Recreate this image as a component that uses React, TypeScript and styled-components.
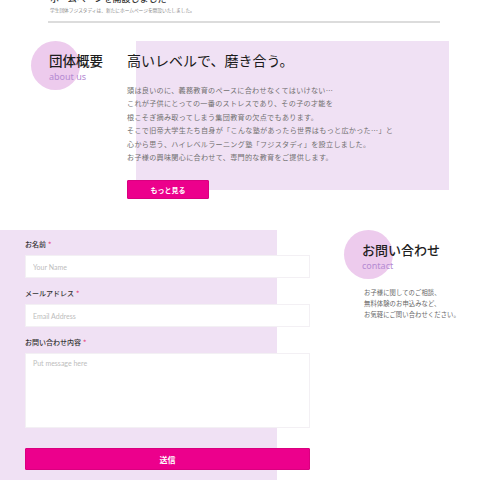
import React from "react";
import styled, { createGlobalStyle } from "styled-components";

const GlobalStyle = createGlobalStyle`
  html, body {
    margin: 0;
    padding: 0;
    background: #ffffff;
    overflow: hidden;
  }
  body {
    font-family: "Noto Sans CJK JP", "Noto Sans", sans-serif;
    color: #222;
  }
  * { box-sizing: border-box; }
`;

const Page = styled.div`
  width: 480px;
  height: 480px;
  overflow: hidden;
`;

/* ---------- news header ---------- */
const NewsHeader = styled.header`
  padding: 0 40px 0 48px;
`;

const NewsTitle = styled.h2`
  margin: -6px 0 0 2px;
  font-size: 9px;
  line-height: 10px;
  font-weight: 500;
  color: #333;
  white-space: nowrap;
`;

const NewsLead = styled.p`
  margin: 3px 0 0 2px;
  font-size: 4.7px;
  line-height: 6px;
  color: #888;
  white-space: nowrap;
`;

const Divider = styled.hr`
  margin: 8px 0 0;
  border: none;
  height: 1.5px;
  background: #dcdcdc;
`;

/* ---------- shared section title with circle ---------- */
const TitleBlock = styled.div`
  position: relative;
  z-index: 0;
  &::before {
    content: "";
    position: absolute;
    left: -18px;
    top: -13px;
    width: 49px;
    height: 49px;
    border-radius: 50%;
    background: #edcbed;
    z-index: -1;
  }
`;

const TitleJa = styled.h2<{ $size: number }>`
  margin: 0;
  font-size: ${(p) => p.$size}px;
  line-height: 1;
  font-weight: 500;
  color: #1e1e1e;
  white-space: nowrap;
`;

const TitleEn = styled.div`
  margin-top: 5px;
  font-family: "Noto Sans", sans-serif;
  font-size: 9px;
  line-height: 10px;
  color: #b48ad2;
  white-space: nowrap;
`;

/* ---------- about ---------- */
const AboutSection = styled.section`
  display: flex;
  margin-top: 18px;
`;

const AboutTitleCol = styled.div`
  width: 127px;
  flex: none;
  padding: 13px 0 0 49px;
`;

const AboutBody = styled.div`
  position: relative;
  z-index: 0;
  padding-top: 12px;
  &::before {
    content: "";
    position: absolute;
    left: 9px;
    top: 0;
    width: 313px;
    height: 149px;
    background: #f0e1f4;
    z-index: -1;
  }
`;

const Catch = styled.h3`
  margin: 0;
  font-size: 14px;
  line-height: 14px;
  font-weight: 400;
  color: #1a1a1a;
  white-space: nowrap;
`;

const AboutText = styled.p`
  margin: 17px 0 0;
  font-size: 7.1px;
  line-height: 13.6px;
  letter-spacing: 0.3px;
  color: #707070;
  white-space: nowrap;
`;

const PinkButton = styled.button<{ $wide?: boolean }>`
  display: block;
  width: ${(p) => (p.$wide ? "100%" : "82px")};
  height: ${(p) => (p.$wide ? "22px" : "19px")};
  border: 1px solid #d9007f;
  border-radius: 1px;
  background: #ec008c;
  color: #fff;
  font-family: "Noto Sans CJK JP", sans-serif;
  font-weight: 700;
  font-size: ${(p) => (p.$wide ? "8px" : "7px")};
  padding: 0;
  cursor: pointer;
`;

const MoreButton = styled(PinkButton)`
  margin-top: 15px;
`;

/* ---------- contact ---------- */
const ContactSection = styled.section`
  display: flex;
  margin-top: 31px;
`;

const FormPanel = styled.form`
  position: relative;
  z-index: 0;
  width: 310px;
  flex: none;
  padding: 7px 0 0 25px;
  &::before {
    content: "";
    position: absolute;
    left: 0;
    top: 0;
    width: 277px;
    height: 300px;
    background: #f0e1f4;
    z-index: -1;
  }
`;

const Field = styled.div`
  & + & {
    margin-top: 8px;
  }
`;

const Label = styled.label`
  display: block;
  font-size: 7px;
  line-height: 14px;
  font-weight: 500;
  color: #333;
  margin-bottom: 4px;
`;

const Req = styled.span`
  color: #e5457e;
  margin-left: 2px;
`;

const Input = styled.input`
  display: block;
  width: 100%;
  height: 23px;
  border: 1px solid #f3f0f4;
  background: #fff;
  padding: 0 7px;
  font-family: Lato, "Noto Sans", sans-serif;
  font-size: 7px;
  outline: none;
  &::placeholder {
    color: #bdbdbd;
  }
`;

const TextArea = styled.textarea`
  display: block;
  width: 100%;
  height: 75px;
  border: 1px solid #f3f0f4;
  background: #fff;
  padding: 5px 7px;
  font-family: Lato, "Noto Sans", sans-serif;
  font-size: 7px;
  resize: none;
  outline: none;
  &::placeholder {
    color: #bdbdbd;
  }
`;

const SubmitRow = styled.div`
  margin-top: 20px;
`;

const ContactInfo = styled.div`
  margin-left: 52px;
  padding-top: 13px;
`;

const InfoText = styled.p`
  margin: 16px 0 0 2px;
  font-size: 6.3px;
  line-height: 11px;
  letter-spacing: 0.1px;
  color: #666;
  white-space: nowrap;
`;

const aboutLines = [
  "頭は良いのに、義務教育のペースに合わせなくてはいけない…",
  "これが子供にとっての一番のストレスであり、その子の才能を",
  "根こそぎ摘み取ってしまう集団教育の欠点でもあります。",
  "そこで旧帝大学生たち自身が「こんな塾があったら世界はもっと広かった…」と",
  "心から思う、ハイレベルラーニング塾「フジスタディ」を設立しました。",
  "お子様の興味関心に合わせて、専門的な教育をご提供します。",
];

const contactLines = [
  "お子様に関してのご相談、",
  "無料体験のお申込みなど、",
  "お気軽にご問い合わせください。",
];

export default function App() {
  return (
    <Page>
      <GlobalStyle />
      <NewsHeader>
        <NewsTitle>ホームページを開設しました</NewsTitle>
        <NewsLead>学生団体フジスタディは、新たにホームページを開設いたしました。</NewsLead>
        <Divider />
      </NewsHeader>

      <AboutSection>
        <AboutTitleCol>
          <TitleBlock>
            <TitleJa $size={13.5}>団体概要</TitleJa>
            <TitleEn>about us</TitleEn>
          </TitleBlock>
        </AboutTitleCol>
        <AboutBody>
          <Catch>高いレベルで、磨き合う。</Catch>
          <AboutText>
            {aboutLines.map((l, i) => (
              <React.Fragment key={i}>
                {l}
                {i < aboutLines.length - 1 && <br />}
              </React.Fragment>
            ))}
          </AboutText>
          <MoreButton type="button">もっと見る</MoreButton>
        </AboutBody>
      </AboutSection>

      <ContactSection>
        <FormPanel onSubmit={(e) => e.preventDefault()}>
          <Field>
            <Label>
              お名前<Req>*</Req>
            </Label>
            <Input placeholder="Your Name" />
          </Field>
          <Field>
            <Label>
              メールアドレス<Req>*</Req>
            </Label>
            <Input placeholder="Email Address" />
          </Field>
          <Field>
            <Label>
              お問い合わせ内容<Req>*</Req>
            </Label>
            <TextArea placeholder="Put message here" />
          </Field>
          <SubmitRow>
            <PinkButton $wide type="submit">送信</PinkButton>
          </SubmitRow>
        </FormPanel>
        <ContactInfo>
          <TitleBlock>
            <TitleJa $size={13}>お問い合わせ</TitleJa>
            <TitleEn>contact</TitleEn>
          </TitleBlock>
          <InfoText>
            {contactLines.map((l, i) => (
              <React.Fragment key={i}>
                {l}
                {i < contactLines.length - 1 && <br />}
              </React.Fragment>
            ))}
          </InfoText>
        </ContactInfo>
      </ContactSection>
    </Page>
  );
}
